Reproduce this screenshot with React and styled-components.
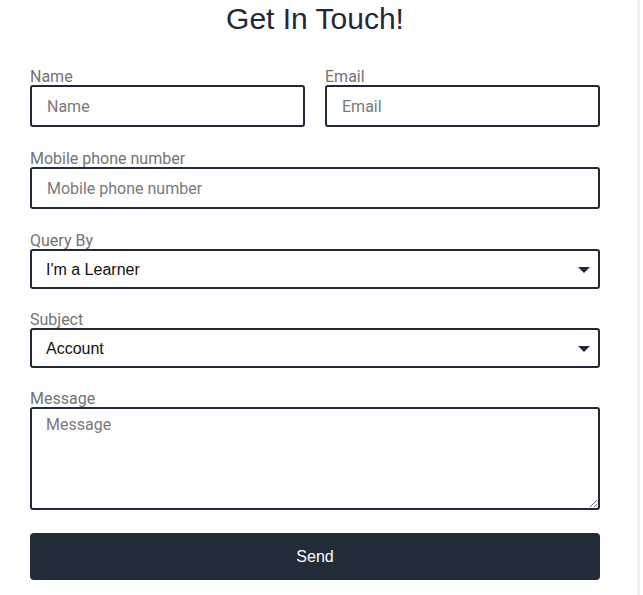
import styled, { createGlobalStyle } from 'styled-components';

const GlobalStyle = createGlobalStyle`
  * { box-sizing: border-box; }
  body {
    margin: 0;
    background: #ffffff;
    font-family: Roboto, "Liberation Sans", sans-serif;
  }
`;

function App() {
  return (
    <>
      <GlobalStyle />
      <Page>
        <Form onSubmit={(e) => e.preventDefault()}>
          <Title>Get In Touch!</Title>

          <Row>
            <Field>
              <Label htmlFor="name">Name</Label>
              <Input id="name" placeholder="Name" />
            </Field>
            <Field>
              <Label htmlFor="email">Email</Label>
              <Input id="email" placeholder="Email" />
            </Field>
          </Row>

          <Field>
            <Label htmlFor="phone">Mobile phone number</Label>
            <Input id="phone" placeholder="Mobile phone number" />
          </Field>

          <Field $tight>
            <Label htmlFor="query">Query By</Label>
            <SelectWrap>
              <Select id="query" defaultValue="learner">
                <option value="learner">I'm a Learner</option>
                <option value="tutor">I'm a Tutor</option>
              </Select>
            </SelectWrap>
          </Field>

          <Field $tight>
            <Label htmlFor="subject">Subject</Label>
            <SelectWrap>
              <Select id="subject" defaultValue="account">
                <option value="account">Account</option>
                <option value="billing">Billing</option>
              </Select>
            </SelectWrap>
          </Field>

          <Field>
            <Label htmlFor="message">Message</Label>
            <TextArea id="message" placeholder="Message" />
          </Field>

          <SendButton type="submit">Send</SendButton>
        </Form>
      </Page>
    </>
  );
}

export default App;

const Page = styled.div`
  width: 640px;
  min-height: 100vh;
  border-right: 3px solid #f1f1f1;
  padding: 0 40px 0 30px;
`;

const Form = styled.form`
  display: flex;
  flex-direction: column;
  width: 570px;
`;

const Title = styled.h1`
  margin: 0 0 32px;
  padding-top: 2px;
  font-family: "Liberation Sans", Arial, sans-serif;
  font-size: 30px;
  font-weight: 400;
  line-height: 34px;
  color: #1f2937;
  text-align: center;
`;

const Row = styled.div`
  display: grid;
  grid-template-columns: 1fr 1fr;
  gap: 20px;
`;

const Field = styled.div`
  display: flex;
  flex-direction: column;
  margin-bottom: ${(p) => (p.$tight ? '22px' : '23px')};
`;

const Label = styled.label`
  font-size: 16px;
  line-height: 18px;
  color: #737373;
  margin-bottom: -1px;
`;

const Input = styled.input`
  width: 100%;
  height: 42px;
  border: 2px solid #1f2937;
  border-radius: 3px;
  padding: 0 15px;
  font-family: Roboto, sans-serif;
  font-size: 16px;
  color: #111;
  outline: none;
  &::placeholder {
    color: #7a7a7a;
  }
`;

const SelectWrap = styled.div`
  position: relative;
  &::after {
    content: '';
    position: absolute;
    right: 10px;
    top: 18px;
    border-left: 6px solid transparent;
    border-right: 6px solid transparent;
    border-top: 6px solid #1f2937;
    pointer-events: none;
  }
`;

const Select = styled.select`
  appearance: none;
  width: 100%;
  height: 40px;
  border: 2px solid #1f2937;
  border-radius: 3px;
  padding: 0 14px;
  background: #fff;
  font-family: "Liberation Sans", Arial, sans-serif;
  font-size: 16px;
  color: #111;
  outline: none;
`;

const TextArea = styled.textarea`
  width: 100%;
  height: 103px;
  border: 2px solid #1f2937;
  border-radius: 3px;
  padding: 6px 14px;
  font-family: Roboto, sans-serif;
  font-size: 16px;
  color: #111;
  outline: none;
  &::placeholder {
    color: #7a7a7a;
  }
`;

const SendButton = styled.button`
  width: 100%;
  height: 47px;
  border: none;
  border-radius: 4px;
  background: #222b38;
  color: #fff;
  font-family: "Liberation Sans", Arial, sans-serif;
  font-size: 16px;
  cursor: pointer;
`;
